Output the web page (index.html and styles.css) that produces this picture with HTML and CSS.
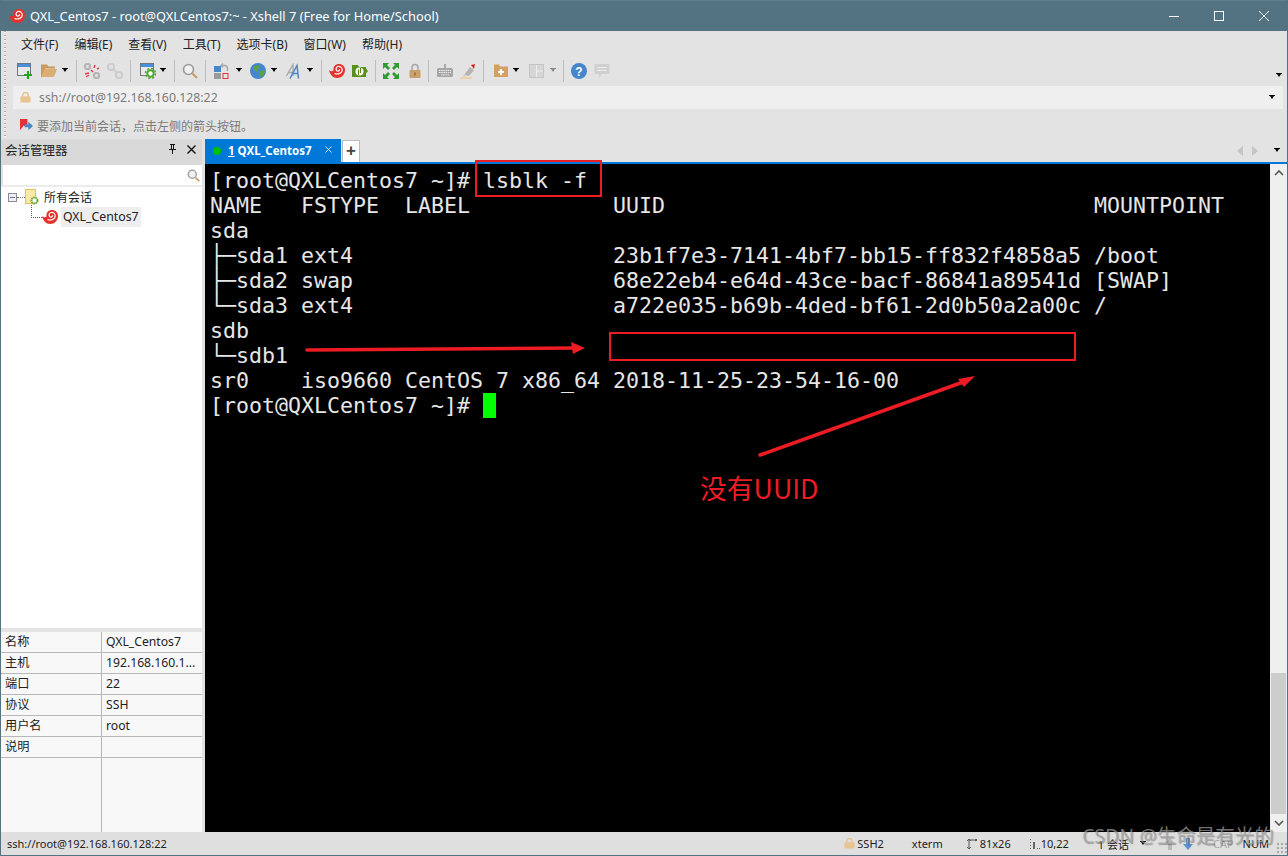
FILE: index.html
```html
<!DOCTYPE html>
<html lang="zh">
<head>
<meta charset="utf-8">
<title>QXL_Centos7 - Xshell 7</title>
<link rel="stylesheet" href="styles.css">
</head>
<body>
<svg class="defs" width="0" height="0" aria-hidden="true">
  <symbol id="logo" viewBox="0 0 16 16">
    <path d="M0 7C1.500 8.500 3.500 8.500 4.500 7.500 4 3.500 6.500 1 10 1c3.500 0 6 2.500 6 6 0 4.500-3.500 8-8 8C4 15 1 11.500 0 7z" fill="#e5322b"/>
    <path d="M5.500 10.500C8 11.500 13 11 13.200 7 13.300 4.500 11 3 9 3.500 7 4 6.500 6.500 7.700 7.700 8.700 8.700 10.700 8 10.500 6.300" fill="none" stroke="#fff" stroke-width="1.200"/>
  </symbol>
  <symbol id="drop" viewBox="0 0 6 5"><path d="M0 0h6v1H5L3 4 1 1H0z" fill="currentColor"/></symbol>
  <symbol id="winbase" viewBox="0 0 16 16">
    <rect x=".5" y=".5" width="13" height="12" fill="#e9e9e9" stroke="#6f7680"/>
    <rect x="1" y="1" width="12" height="3" fill="#4a90d9"/>
  </symbol>
  <symbol id="lock" viewBox="0 0 16 16">
    <path d="M5 7V4.500a3 3 0 0 1 6 0V7" fill="none" stroke="#a9a9a9" stroke-width="1.600"/>
    <rect x="2.500" y="7" width="11" height="8" rx="1" fill="#c9a06a"/>
    <rect x="7" y="9.500" width="2" height="3" fill="#9d7a4a"/>
  </symbol>
  <symbol id="softlock" viewBox="0 0 12 12">
    <path d="M3 5V3.500a3 3 0 0 1 6 0V5" fill="none" stroke="#e8c490" stroke-width="1.600"/>
    <rect x=".5" y="4.500" width="11" height="7" rx="1" fill="#e8c490"/>
  </symbol>
  <symbol id="search" viewBox="0 0 16 16">
    <circle cx="6.500" cy="6.500" r="5" fill="#f0f0f0" stroke="#9a9a9a" stroke-width="1.600"/>
    <path d="M10.500 10.500l4.500 4.500" stroke="#c9a06a" stroke-width="2.200"/>
  </symbol>
</svg>

<div class="win">
  <header class="titlebar">
    <svg class="tlogo"><use href="#logo"/></svg>
    <span class="ttext">QXL_Centos7 - root@QXLCentos7:~ - Xshell 7 (Free for Home/School)</span>
    <span class="caption">
      <svg viewBox="0 0 10 10"><path d="M0 5.500h10" stroke="#fff"/></svg>
      <svg viewBox="0 0 10 10"><rect x=".5" y=".5" width="9" height="9" fill="none" stroke="#fff"/></svg>
      <svg viewBox="0 0 10 10"><path d="M0 0l10 10M10 0L0 10" stroke="#fff"/></svg>
    </span>
  </header>

  <div class="top">
    <div class="gripper"></div>
    <div class="bars">
      <nav class="menubar">
        <span>文件(F)</span><span>编辑(E)</span><span>查看(V)</span><span>工具(T)</span><span>选项卡(B)</span><span>窗口(W)</span><span>帮助(H)</span>
      </nav>
      <div class="toolbar">
        <svg class="ic first" viewBox="0 0 16 16"><use href="#winbase"/><path d="M11 8v8M7 12h8" stroke="#1fa51f" stroke-width="2.200"/></svg>
        <svg class="ic m8" viewBox="0 0 16 16"><path d="M0 1.500h6l1.500 2H14v2H4L1 14H0z" fill="#c99a5e"/><path d="M3.500 6H16l-3 8H.6z" fill="#dcae74"/></svg>
        <svg class="dd m5"><use href="#drop"/></svg>
        <i class="sep m8"></i>
        <svg class="ic m7" viewBox="0 0 16 16"><g fill="none" stroke="#b4b4b4" stroke-width="2.200"><rect x="1" y="1" width="5" height="5" rx="2"/><rect x="10" y="10" width="5" height="5" rx="2"/></g><path d="M1 11l4-1M11 2l-1 3M7 7l2 2M13 6l2-1M2 14l3-2" stroke="#e8414a" stroke-width="1.500"/></svg>
        <svg class="ic m7" viewBox="0 0 16 16"><g fill="none" stroke="#cdcdcd" stroke-width="2.200"><rect x="1" y="1" width="6" height="6" rx="2.500"/><rect x="9" y="9" width="6" height="6" rx="2.500"/><path d="M6 6l4 4"/></g></svg>
        <i class="sep m7"></i>
        <svg class="ic m9" viewBox="0 0 16 16"><use href="#winbase"/><circle cx="10.500" cy="10.500" r="3.200" fill="#fff" stroke="#4ea72e" stroke-width="2"/><circle cx="10.500" cy="10.500" r="5" fill="none" stroke="#4ea72e" stroke-width="1.500" stroke-dasharray="2 1.930"/></svg>
        <svg class="dd m4"><use href="#drop"/></svg>
        <i class="sep m8"></i>
        <svg class="ic m7"><use href="#search"/></svg>
        <i class="sep m7"></i>
        <svg class="ic m8" viewBox="0 0 16 16"><rect x="0" y="3" width="7" height="6" fill="#4a86c8"/><rect x="0" y="10" width="7" height="6" fill="#9a9a9a"/><rect x="9" y="10.500" width="5" height="5" fill="none" stroke="#e0303a"/><path d="M7 2.500h3.500a3 3 0 0 1 3 3V8M9 .5L7 2.500l2 2" fill="none" stroke="#a8a8a8" stroke-width="1.400"/></svg>
        <svg class="dd m6"><use href="#drop"/></svg>
        <svg class="ic m8" viewBox="0 0 16 16"><circle cx="8" cy="8" r="8" fill="#4586cc"/><path d="M4 3l4-1 2 2-2 2-1 3-2-1-1-2zM10 8l4-1 1 2-2 4-3 1-1-3z" fill="#5aa24a"/></svg>
        <svg class="dd m5"><use href="#drop"/></svg>
        <svg class="ic m9" viewBox="0 0 16 16"><path d="M.5 13L7 1.500V13M2.500 9.500H7" fill="none" stroke="#a9a9a9" stroke-width="1.300"/><path d="M4 15.500L11 2.500l1.500 13M6.500 10.500h6" fill="none" stroke="#4a86c8" stroke-width="1.500"/></svg>
        <svg class="dd m5"><use href="#drop"/></svg>
        <i class="sep m8"></i>
        <svg class="ic m7"><use href="#logo"/></svg>
        <svg class="ic m7" viewBox="0 0 16 16"><path d="M0 2h6l1 2h7v1.500L16 8l-2 2.500V14H0z" fill="#5b8f1c"/><circle cx="7.500" cy="8.500" r="4" fill="#fff"/><path d="M6.500 12V6.500M8.500 5v5" stroke="#5b8f1c" stroke-width="1.200"/></svg>
        <i class="sep m7"></i>
        <svg class="ic m7" viewBox="0 0 16 16"><path d="M0 0h6L4 2l3 3-2 2-3-3-2 2zM16 0v6l-2-2-3 3-2-2 3-3-2-2zM0 16v-6l2 2 3-3 2 2-3 3 2 2zM16 16h-6l2-2-3-3 2-2 3 3 2-2z" fill="#2f9c2f"/></svg>
        <svg class="ic m8"><use href="#lock"/></svg>
        <i class="sep m5"></i>
        <svg class="ic m8" viewBox="0 0 16 16"><rect y="5" width="16" height="9" rx="1.500" fill="#a6a6a6"/><path d="M8 1v4" stroke="#777"/><path d="M2 7.500h12M2 9.500h12M4 11.800h8" stroke="#eee" stroke-dasharray="1.500 .7"/></svg>
        <svg class="ic m7" viewBox="0 0 16 16"><path d="M4 12L10 4l4 3-5 6z" fill="#b5b5b5"/><path d="M11 2l4-1-1 5z" fill="#d8232f"/><path d="M0 15h12" stroke="#eec58c" stroke-width="1.200"/><path d="M4 12l-1.500 2 3-.5z" fill="#eec58c"/></svg>
        <i class="sep m7"></i>
        <svg class="ic m9" viewBox="0 0 16 16"><path d="M1 1.500h5l1 2h8V14H1z" fill="#d3a262"/><path d="M8 6v6M5 9h6" stroke="#fff" stroke-width="2"/></svg>
        <svg class="dd m4"><use href="#drop"/></svg>
        <svg class="ic m10" viewBox="0 0 16 16"><rect x=".5" y="1.500" width="14" height="13" fill="#d6d6d6" stroke="#c4c4c4"/><path d="M7.500 2v12M7.500 8H14" stroke="#efefef" stroke-width="1"/></svg>
        <svg class="dd m5 off"><use href="#drop"/></svg>
        <i class="sep m7"></i>
        <svg class="ic m7" viewBox="0 0 16 16"><circle cx="8" cy="8" r="8" fill="#4586cc"/><text x="8" y="12.500" class="qmark">?</text></svg>
        <svg class="ic m7" viewBox="0 0 16 16"><path d="M1.500 1h13a1 1 0 0 1 1 1v8a1 1 0 0 1-1 1H8l-3 4v-4H1.500a1 1 0 0 1-1-1V2a1 1 0 0 1 1-1z" fill="#d0d0d0"/><path d="M3 4.500h10M3 7.500h10" stroke="#ebebeb" stroke-width="1.200"/></svg>
        <svg class="dd endd"><use href="#drop"/></svg>
      </div>
      <div class="addr">
        <svg class="addr-lock"><use href="#softlock"/></svg>
        <span class="addr-text">ssh://root@192.168.160.128:22</span>
        <svg class="dd"><use href="#drop"/></svg>
      </div>
      <div class="hint">
        <svg class="hint-ic" viewBox="0 0 14 14"><path d="M0 0h8v9L4 7 0 12z" fill="#e5323a"/><path d="M5 6h4V3l5 4.500L9 12V9H5z" fill="#4a86c8"/></svg>
        <span>要添加当前会话，点击左侧的箭头按钮。</span>
      </div>
    </div>
  </div>

  <main class="main">
    <aside class="side">
      <div class="side-head">
        <span>会话管理器</span>
        <svg class="pin" viewBox="0 0 9 11"><path d="M2 0h5v1H6v4h2v1H5v4H4V6H1V5h2V1H2zM4 1v4h1V1z" fill="#111"/></svg>
        <svg class="xx" viewBox="0 0 9 9"><path d="M.5.500l8 8M8.500.500l-8 8" stroke="#111" stroke-width="1.400"/></svg>
      </div>
      <div class="side-search"><svg class="ssearch"><use href="#search"/></svg></div>
      <div class="tree">
        <div class="tree-row root">
          <i class="minus"></i><i class="dots-h"></i>
          <svg class="tfolder" viewBox="0 0 14 16"><rect x=".5" y=".5" width="10" height="14" fill="#fbe9a8" stroke="#e2c25e"/><circle cx="9.500" cy="11.500" r="3" fill="#fff" stroke="#6aa52e" stroke-width="2" stroke-dasharray="1.500 .6"/></svg>
          <span>所有会话</span>
        </div>
        <div class="tree-row child">
          <i class="elbow"></i>
          <svg class="tlogo2"><use href="#logo"/></svg>
          <span class="sel">QXL_Centos7</span>
        </div>
      </div>
      <div class="props">
        <div class="prow"><span>名称</span><span>QXL_Centos7</span></div>
        <div class="prow"><span>主机</span><span>192.168.160.1...</span></div>
        <div class="prow"><span>端口</span><span>22</span></div>
        <div class="prow"><span>协议</span><span>SSH</span></div>
        <div class="prow"><span>用户名</span><span>root</span></div>
        <div class="prow"><span>说明</span><span></span></div>
        <div class="prow fill"><span></span><span></span></div>
      </div>
    </aside>

    <section class="work">
      <div class="tabs">
        <div class="tab">
          <i class="dot"></i>
          <span class="tab-name"><u>1</u> QXL_Centos7</span>
          <svg class="tab-x" viewBox="0 0 7 7"><path d="M.5.500l6 6M6.500.500l-6 6" stroke="#cfe6fa"/></svg>
        </div>
        <div class="plus">+</div>
        <div class="tabs-right">
          <svg class="nav" viewBox="0 0 6 10"><path d="M6 0v10L0 5z"/></svg>
          <svg class="nav" viewBox="0 0 6 10"><path d="M0 0v10l6-5z"/></svg>
          <svg class="dd"><use href="#drop"/></svg>
        </div>
      </div>
      <div class="termwrap">
        <pre class="term">[root@QXLCentos7 ~]# lsblk -f
NAME   FSTYPE  LABEL           UUID                                 MOUNTPOINT
sda
├─sda1 ext4                    23b1f7e3-7141-4bf7-bb15-ff832f4858a5 /boot
├─sda2 swap                    68e22eb4-e64d-43ce-bacf-86841a89541d [SWAP]
└─sda3 ext4                    a722e035-b69b-4ded-bf61-2d0b50a2a00c /
sdb
└─sdb1
sr0    iso9660 CentOS 7 x86_64 2018-11-25-23-54-16-00
[root@QXLCentos7 ~]# <span class="cursor"> </span></pre>
        <div class="sbar">
          <svg class="chev" viewBox="0 0 10 6"><path d="M1 5l4-4 4 4" fill="none" stroke="#555" stroke-width="1.600"/></svg>
          <div class="sbar-space"></div>
          <div class="thumb"></div>
          <svg class="chev" viewBox="0 0 10 6"><path d="M1 1l4 4 4-4" fill="none" stroke="#555" stroke-width="1.600"/></svg>
        </div>
      </div>
    </section>
  </main>

  <footer class="status">
    <span class="st-path">ssh://root@192.168.160.128:22</span>
    <svg class="st-lock"><use href="#softlock"/></svg>
    <span class="s2">SSH2</span>
    <span class="s28">xterm</span>
    <svg class="st-ic s24" viewBox="0 0 10 10"><path d="M2 0v10M0 2l2-2 2 2M0 8l2 2 2-2M2 1h8M8 0l2 1-2 1" fill="none" stroke="#555"/></svg>
    <span class="s3">81x26</span>
    <svg class="st-ic s19" viewBox="0 0 10 10"><path d="M0 0h1v1H0zM0 3h1v1H0zM0 6h1v1H0zM0 9h1v1H0zM3 3h2v7H3zM7 9h1v1H7zM9 9h1v1H9z" fill="#666"/></svg>
    <span class="s1">10,22</span>
    <span class="s29">1 会话</span>
    <svg class="dd s11"><use href="#drop"/></svg>
    <svg class="st-ar up" viewBox="0 0 10 12"><path d="M5 0l5 6H7v6H3V6H0z" fill="#b8b8b8"/></svg>
    <svg class="st-ar down" viewBox="0 0 10 12"><path d="M5 12l5-6H7V0H3v6H0z" fill="#5b94d0"/></svg>
    <span class="cap">CAP</span>
    <span class="num">NUM</span>
    <i class="grip"></i>
  </footer>
</div>

<svg class="marks" viewBox="0 0 1288 856" aria-hidden="true">
  <rect x="476" y="161" width="125" height="35" class="box"/>
  <rect x="610" y="333" width="465" height="27" class="box"/>
  <path d="M307 350L574 348" class="line"/>
  <path d="M585 348L571 342L573 354z" class="head"/>
  <path d="M760 455L966 381" class="line"/>
  <path d="M975 376L958 379L964 387z" class="head"/>
</svg>
<div class="note">没有UUID</div>
<div class="wm">CSDN @生命是有光的</div>
</body>
</html>
```
FILE: styles.css
```css
* { box-sizing: border-box; }
html, body { margin: 0; padding: 0; }
body {
  width: 1288px; height: 856px; overflow: hidden; position: relative;
  font-family: "Noto Sans", "Noto Sans CJK SC", sans-serif;
  font-size: 12px; color: #222; background: #e3e3e3;
}
i { display: block; font-style: normal; }
svg { display: block; flex: none; }
.defs { position: absolute; }

.win {
  width: 1288px; height: 856px; display: flex; flex-direction: column;
  background: #e3e3e3; border-left: 1px solid #537282; border-right: 1px solid #537282;
  border-bottom: 1px solid #537282;
}

/* title bar */
.titlebar { height: 31px; flex: none; background: #537282; border-top: 1px solid #5f7d8c; display: flex; align-items: center; color: #fff; padding: 0 0 1px 8px; }
.tlogo { width: 16px; height: 16px; }
.ttext { margin-left: 5px; font-size: 12.8px; white-space: nowrap; }
.caption { margin-left: auto; display: flex; align-items: center; margin-right: 18px; gap: 35px; }
.caption svg { width: 10px; height: 10px; }

/* top bars */
.top { display: flex; height: 107px; flex: none; }
.gripper { width: 12px; flex: none; margin-left: 3px; margin-right: -3px;
  background-image: repeating-linear-gradient(to bottom, #aaa 0 1px, #f5f5f5 1px 2px, transparent 2px 4px);
  background-size: 2px 100%; background-repeat: no-repeat; }
.bars { flex: 1; min-width: 0; display: flex; flex-direction: column; }
.menubar { height: 25px; display: flex; align-items: center; gap: 16px; padding-left: 8px; white-space: nowrap; flex: none; }
.toolbar { height: 29px; display: flex; align-items: center; padding-left: 4px; color: #000; flex: none; position: relative; }
.ic { width: 16px; height: 16px; }
.first { margin-left: 0; }
.dd { width: 6px; height: 5px; color: #000; }
.dd.off { color: #888; }
.endd { margin-left: auto; margin-right: 5px; margin-top: 10px; }
.sep { width: 1px; height: 22px; background: #bdbdbd; }
.m4 { margin-left: 4px; } .m5 { margin-left: 5px; } .m6 { margin-left: 6px; }
.m7 { margin-left: 7px; } .m8 { margin-left: 8px; } .m9 { margin-left: 9px; } .m10 { margin-left: 10px; }
.qmark { font: bold 12px "Liberation Sans", sans-serif; fill: #fff; text-anchor: middle; }

.addr { height: 23px; margin-top: 1px; margin-right: 4px; background: #efefef; display: flex; align-items: center; padding: 0 8px 0 7px; flex: none; }
.addr-lock { width: 11px; height: 11px; }
.addr-text { margin-left: 8px; font-size: 12.3px; color: #7a7a7a; }
.addr .dd { margin-left: auto; }

.hint { height: 29px; display: flex; align-items: center; padding: 4px 0 0 7px; color: #7a7a7a; flex: none; }
.hint-ic { width: 13px; height: 13px; margin-right: 4px; }

/* main */
.main { flex: 1; min-height: 0; display: flex; padding-top: 1px; }
.side { width: 201px; flex: none; display: flex; flex-direction: column; }
.side-head { height: 26px; background: #d9d9d9; display: flex; align-items: center; padding: 0 0 5px 4px; font-size: 12.500px; flex: none; }
.side-head span { flex: 1; }
.pin { width: 9px; height: 11px; margin-right: 10px; }
.xx { width: 9px; height: 9px; margin-right: 6px; }
.side-search { height: 20px; margin-left: 2px; background: #fff; display: flex; align-items: center; justify-content: flex-end; padding-right: 2px; flex: none; }
.ssearch { width: 13px; height: 13px; }
.tree { flex: 1; min-height: 0; background: #fff; border-top: 2px solid #ececec; padding: 1px 0 0 7px; }
.tree-row { display: flex; align-items: center; }
.root { height: 18px; }
.child { height: 21px; padding-left: 22px; position: relative; }
.minus { width: 9px; height: 9px; border: 1px solid #8c8c8c; background: linear-gradient(#777,#777) center/5px 1px no-repeat #eef; }
.dots-h { width: 8px; height: 0; border-top: 1px dotted #666; }
.tfolder { width: 14px; height: 16px; }
.root span { margin-left: 5px; }
.elbow { position: absolute; left: 23px; top: -1px; width: 11px; height: 13px; border-left: 1px dotted #555; border-bottom: 1px dotted #555; }
.tlogo2 { width: 16px; height: 16px; margin-left: 12px; }
.sel { margin-left: 3px; padding: 0 2px; background: #eee; height: 20px; line-height: 20px; font-size: 12.3px; }

.props { height: 200px; margin-top: 4px; background: #f8f8f8; display: flex; flex-direction: column; flex: none; font-size: 12.2px; }
.prow { height: 21px; display: flex; border-bottom: 1px solid #b8b8b8; line-height: 20px; flex: none; }
.prow span:first-child { width: 101px; padding-left: 4px; border-right: 1px solid #b8b8b8; flex: none; }
.prow span:last-child { padding-left: 4px; }
.prow.fill { flex: 1; border-bottom: 0; }

/* work area */
.work { flex: 1; min-width: 0; margin-left: 3px; display: flex; flex-direction: column; }
.tabs { height: 23px; display: flex; flex: none; }
.tab { width: 136px; background: #0078d7; display: flex; align-items: center; color: #fff; padding-left: 8px; }
.dot { width: 8px; height: 8px; border-radius: 50%; background: #00c200; }
.tab-name { margin-left: 7px; font-weight: 700; font-size: 11.5px; white-space: nowrap; }
.tab-x { width: 7px; height: 7px; margin-left: auto; margin-right: 9px; margin-bottom: 2px; }
.plus { width: 18px; margin: 1px 0 0 1px; background: #fff; border: 1px solid #bbb; border-bottom: 0; text-align: center; font: bold 17px/19px "Liberation Sans", sans-serif; color: #444; }
.tabs-right { margin-left: auto; display: flex; align-items: center; padding-right: 7px; }
.nav { width: 6px; height: 10px; fill: #c6c6c6; margin-right: 9px; }
.nav + .nav { margin-right: 16px; }
.termwrap { flex: 1; min-height: 0; display: flex; border-top: 2px solid #0078d7; }
.term {
  flex: 1; margin: 0; background: #000; color: #e6e6e6; padding: 4px 0 0 5px;
  font-family: "DejaVu Sans Mono", monospace; font-size: 21.6px; line-height: 25px;
}
.cursor { background: #00ff00; }
.sbar { width: 17px; background: #efefef; display: flex; flex-direction: column; align-items: center; flex: none; }
.chev { width: 10px; height: 6px; margin: 6px 0; }
.sbar-space { flex: 1; }
.thumb { width: 15px; height: 141px; background: #cdcdcd; }

/* status */
.status { height: 23px; flex: none; background: #dfdfdf; display: flex; align-items: center; white-space: nowrap; padding-left: 6px; font-size: 11px; position: relative; }
.st-lock { width: 11px; height: 11px; margin-left: auto; }
.st-ic { width: 10px; height: 10px; }
.s1 { margin-left: 1px; } .s2 { margin-left: 2px; } .s3 { margin-left: 3px; }
.s11 { margin-left: 11px; } .s19 { margin-left: 19px; } .s24 { margin-left: 24px; } .s28 { margin-left: 28px; } .s29 { margin-left: 29px; }
.st-ar { width: 10px; height: 12px; }
.up { margin-left: 19px; } .down { margin-left: 8px; }
.cap { margin-left: 20px; color: #aaa; }
.num { margin-left: 9px; }
.grip { width: 11px; height: 11px; margin: 8px 0 0 7px; flex: none;
  background-image: radial-gradient(circle, #aaa 1px, transparent 1.200px); background-size: 4px 4px; }

/* annotations over the screenshot */
.marks { position: absolute; left: 0; top: 0; width: 1288px; height: 856px; pointer-events: none; }
.box { fill: none; stroke: #ed1c24; stroke-width: 2; }
.line { stroke: #ed1c24; stroke-width: 3.500; stroke-linecap: round; fill: none; }
.head { fill: #ed1c24; }
.note { position: absolute; left: 700px; top: 469px; font-size: 26.8px; line-height: 38px; color: #ed1c24; font-family: "Noto Sans CJK SC", sans-serif; }
.wm { position: absolute; left: 1082px; top: 822px; font-size: 19.500px; line-height: 28px; color: rgba(165,165,165,.7); text-shadow: 1px 1px 1px rgba(0,0,0,.3); white-space: nowrap; }
```
